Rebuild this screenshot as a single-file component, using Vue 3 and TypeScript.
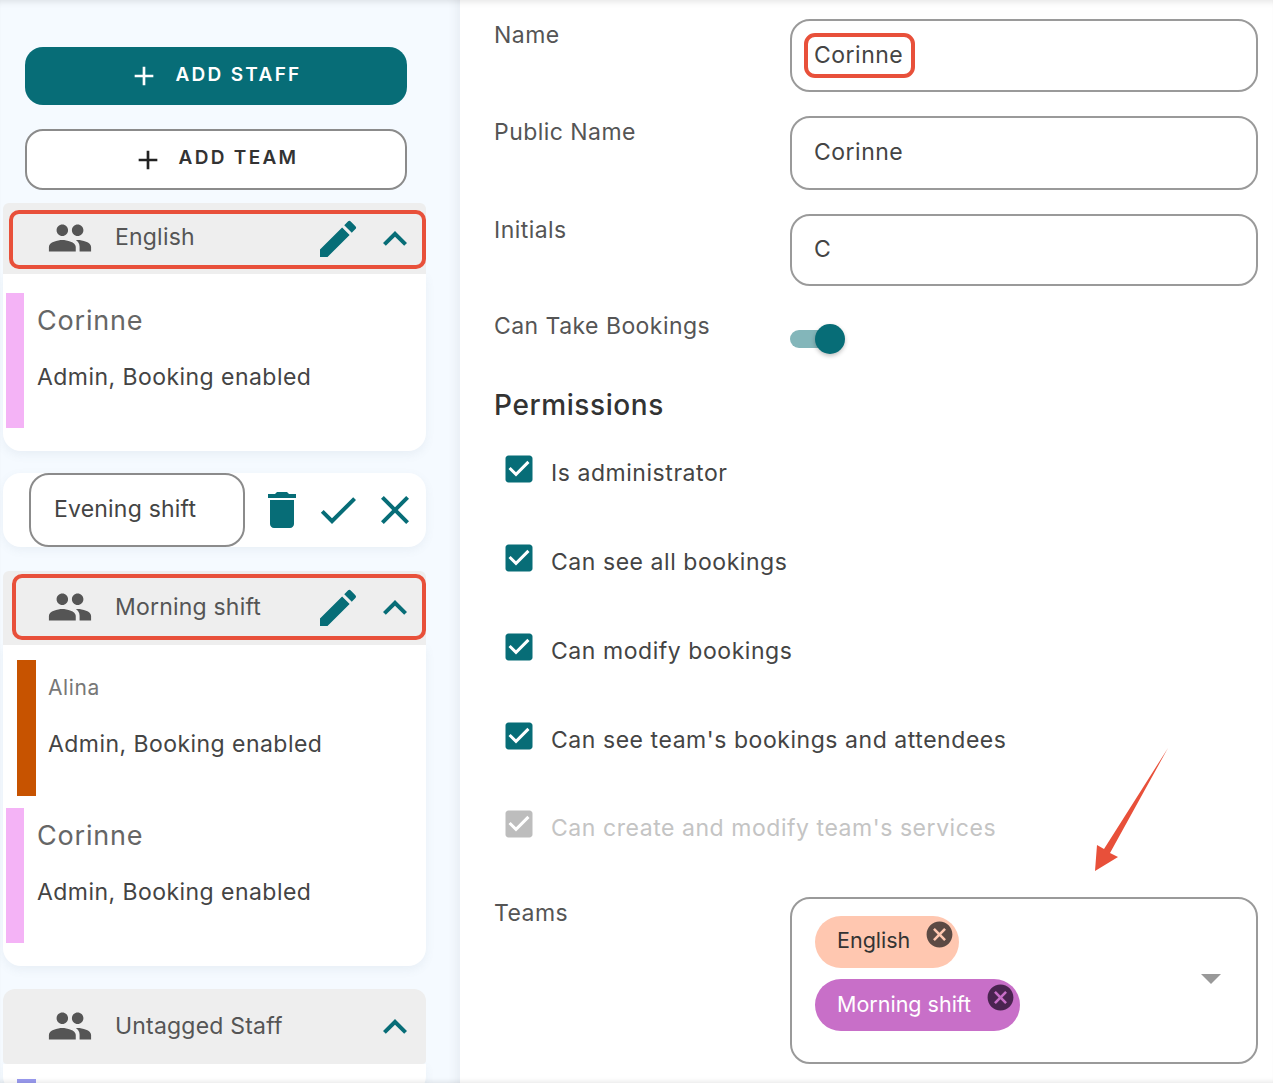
<script setup lang="ts">
interface Member {
  name: string
  color: string
  small?: boolean
  indent?: boolean
}

interface Team {
  name: string
  members: Member[]
}

const corinne: Member = { name: 'Corinne', color: '#f4b3f6' }

const english: Team = { name: 'English', members: [corinne] }
const morning: Team = {
  name: 'Morning shift',
  members: [{ name: 'Alina', color: '#c75300', small: true, indent: true }, corinne],
}

const permissions = [
  { label: 'Is administrator', disabled: false },
  { label: 'Can see all bookings', disabled: false },
  { label: 'Can modify bookings', disabled: false },
  { label: "Can see team's bookings and attendees", disabled: false },
  { label: "Can create and modify team's services", disabled: true },
]

const fields = [
  { label: 'Name', value: 'Corinne', marked: true, height: 73, gap: 24 },
  { label: 'Public Name', value: 'Corinne', marked: false, height: 74, gap: 24 },
  { label: 'Initials', value: 'C', marked: false, height: 72, gap: 24 },
]

const icons = {
  people: 'M16 11c1.66 0 2.99-1.34 2.99-3S17.66 5 16 5c-1.66 0-3 1.34-3 3s1.34 3 3 3zm-8 0c1.66 0 2.99-1.34 2.99-3S9.66 5 8 5C6.34 5 5 6.34 5 8s1.34 3 3 3zm0 2c-2.33 0-7 1.17-7 3.5V19h14v-2.5c0-2.33-4.67-3.5-7-3.5zm8 0c-.29 0-.62.02-.97.05 1.16.84 1.97 1.97 1.97 3.45V19h6v-2.5c0-2.33-4.67-3.5-7-3.5z',
  pencil: 'M3 17.25V21h3.75L17.81 9.94l-3.75-3.75L3 17.25zM20.71 7.04a.996.996 0 000-1.41l-2.34-2.34a.996.996 0 00-1.41 0l-1.83 1.83 3.75 3.75 1.83-1.83z',
  chevron: 'M7.41 15.41L12 10.83l4.59 4.58L18 14l-6-6-6 6z',
  trash: 'M6 19c0 1.1.9 2 2 2h8c1.1 0 2-.9 2-2V7H6v12zM19 4h-3.5l-1-1h-5l-1 1H5v2h14V4z',
  check: 'M9 16.17L4.83 12l-1.41 1.41L9 19 21 7l-1.41-1.41z',
  close: 'M19 6.41L17.59 5 12 10.59 6.41 5 5 6.41 10.59 12 5 17.59 6.41 19 12 13.41 17.59 19 19 17.59 13.41 12z',
  plus: 'M19 13h-6v6h-2v-6H5v-2h6V5h2v6h6v2z',
  cancel: 'M12 2C6.47 2 2 6.47 2 12s4.47 10 10 10 10-4.47 10-10S17.53 2 12 2zm5 13.59L15.59 17 12 13.41 8.41 17 7 15.59 10.59 12 7 8.41 8.41 7 12 10.59 15.59 7 17 8.41 13.41 12 17 15.59z',
  checkbox: 'M19 3H5c-1.11 0-2 .9-2 2v14c0 1.1.89 2 2 2h14c1.11 0 2-.9 2-2V5c0-1.1-.89-2-2-2zm-9 14l-5-5 1.41-1.41L10 14.17l7.59-7.59L19 8l-9 9z',
}
</script>

<template>
  <div class="page">
    <aside class="sidebar">
      <button class="add-btn primary">
        <svg class="plus" viewBox="0 0 24 24"><path :d="icons.plus" /></svg>
        <span>ADD STAFF</span>
      </button>
      <button class="add-btn outline">
        <svg class="plus" viewBox="0 0 24 24"><path :d="icons.plus" /></svg>
        <span>ADD TEAM</span>
      </button>

      <section class="team first">
        <header class="team-head">
          <svg class="ic people" viewBox="0 0 24 24"><path :d="icons.people" /></svg>
          <span class="team-name">{{ english.name }}</span>
          <svg class="ic teal pencil" viewBox="0 0 24 24"><path :d="icons.pencil" /></svg>
          <svg class="ic teal chevron" viewBox="0 0 24 24"><path :d="icons.chevron" /></svg>
          <div class="mark"></div>
        </header>
        <div class="team-body">
          <div v-for="m in english.members" :key="m.name" class="member">
            <div class="stripe" :style="{ background: m.color }"></div>
            <div class="member-text">
              <div class="member-name">{{ m.name }}</div>
              <div class="member-role">Admin, Booking enabled</div>
            </div>
          </div>
        </div>
      </section>

      <section class="edit-card">
        <div class="edit-input">Evening shift</div>
        <svg class="ic teal trash" viewBox="0 0 24 24"><path :d="icons.trash" /></svg>
        <svg class="ic teal check" viewBox="0 0 24 24"><path :d="icons.check" /></svg>
        <svg class="ic teal close" viewBox="0 0 24 24"><path :d="icons.close" /></svg>
      </section>

      <section class="team second">
        <header class="team-head">
          <svg class="ic people" viewBox="0 0 24 24"><path :d="icons.people" /></svg>
          <span class="team-name">{{ morning.name }}</span>
          <svg class="ic teal pencil" viewBox="0 0 24 24"><path :d="icons.pencil" /></svg>
          <svg class="ic teal chevron" viewBox="0 0 24 24"><path :d="icons.chevron" /></svg>
          <div class="mark narrow"></div>
        </header>
        <div class="team-body">
          <div
            v-for="m in morning.members"
            :key="m.name"
            class="member"
            :class="{ indent: m.indent }"
          >
            <div class="stripe" :style="{ background: m.color }"></div>
            <div class="member-text">
              <div class="member-name" :class="{ small: m.small }">{{ m.name }}</div>
              <div class="member-role">Admin, Booking enabled</div>
            </div>
          </div>
        </div>
      </section>

      <section class="team third">
        <header class="team-head">
          <svg class="ic people" viewBox="0 0 24 24"><path :d="icons.people" /></svg>
          <span class="team-name">Untagged Staff</span>
          <svg class="ic teal chevron" viewBox="0 0 24 24"><path :d="icons.chevron" /></svg>
        </header>
        <div class="team-body tail">
          <div class="stripe blue"></div>
        </div>
      </section>
    </aside>

    <main class="form">
      <div
        v-for="f in fields"
        :key="f.label"
        class="row"
        :style="{ marginBottom: f.gap + 'px' }"
      >
        <label class="label">{{ f.label }}</label>
        <div class="input" :style="{ height: f.height + 'px' }">
          <span class="value" :class="{ marked: f.marked }">{{ f.value }}</span>
        </div>
      </div>

      <div class="row toggle-row">
        <label class="label">Can Take Bookings</label>
        <div class="toggle">
          <div class="track"></div>
          <div class="thumb"></div>
        </div>
      </div>

      <h2 class="heading">Permissions</h2>

      <div class="perms">
        <div
          v-for="p in permissions"
          :key="p.label"
          class="perm"
          :class="{ disabled: p.disabled }"
        >
          <svg class="box" viewBox="0 0 24 24"><path :d="icons.checkbox" /></svg>
          <span>{{ p.label }}</span>
        </div>
      </div>

      <div class="row teams-row">
        <label class="label">Teams</label>
        <div class="select">
          <div class="chips">
            <div class="chip peach">
              <span>English</span>
              <svg viewBox="0 0 24 24"><path :d="icons.cancel" /></svg>
            </div>
            <div class="chip purple">
              <span>Morning shift</span>
              <svg viewBox="0 0 24 24"><path :d="icons.cancel" /></svg>
            </div>
          </div>
          <div class="caret"></div>
        </div>
      </div>
    </main>

    <svg class="arrow" viewBox="0 0 80 130" width="80" height="130">
      <path d="M75 1 L17 106 L25 110 L2 124 L4 98 L11 102 Z" fill="#e8503a" />
    </svg>
    <div class="edge"></div>
  </div>
</template>

<style>
html,
body {
  margin: 0;
  background: #fff;
}
</style>

<style scoped>
.page {
  position: relative;
  display: flex;
  width: 1273px;
  height: 1083px;
  overflow: hidden;
  background: #fff;
  font-family: Inter, "Liberation Sans", sans-serif;
  color: #555;
}

.edge {
  position: absolute;
  inset: 0;
  pointer-events: none;
  box-shadow: inset 0 7px 6px -5px rgba(0, 0, 0, 0.1), inset 0 -5px 4px -3px rgba(0, 0, 0, 0.08);
}

.sidebar {
  width: 460px;
  flex: none;
  box-sizing: border-box;
  padding-top: 47px;
  background: #f5faff;
  box-shadow: inset -12px 0 10px -8px rgba(60, 70, 90, 0.07);
}

.add-btn {
  display: flex;
  align-items: center;
  justify-content: center;
  gap: 15px;
  box-sizing: border-box;
  width: 382px;
  margin-left: 25px;
  padding: 0 2px 0 0;
  border-radius: 18px;
  font-family: inherit;
  font-size: 19px;
  font-weight: 600;
  letter-spacing: 2.3px;
}

.add-btn span {
  position: relative;
  top: -2px;
}

.add-btn.primary {
  height: 58px;
  border: none;
  background: #076d77;
  color: #fff;
}

.add-btn.primary .plus {
  fill: #fff;
}

.add-btn.outline {
  height: 61px;
  margin-top: 24px;
  border: 2px solid #8b8b8b;
  background: #fff;
  color: #333;
}

.add-btn.outline .plus {
  fill: #222;
}

.plus {
  width: 32px;
  height: 32px;
}

.team {
  width: 423px;
  margin-left: 3px;
}

.team.first {
  margin-top: 13px;
}

.team.second {
  margin-top: 24px;
}

.team.third {
  margin-top: 23px;
}

.team-head {
  position: relative;
  display: flex;
  align-items: center;
  height: 71px;
  padding-left: 44px;
  padding-right: 7px;
  background: #eeeeee;
  border-radius: 6px 6px 0 0;
  box-sizing: border-box;
}

.second .team-head {
  height: 74px;
}

.third .team-head {
  height: 75px;
  border-radius: 12px 12px 4px 4px;
}

.ic {
  flex: none;
  width: 48px;
  height: 48px;
}

.people {
  width: 46px;
  height: 46px;
  fill: #555;
  position: relative;
  top: -1px;
}

.teal {
  fill: #076d77;
}

.team-name {
  flex: 1;
  position: relative;
  top: -1px;
  margin-left: 22px;
  font-size: 23px;
  letter-spacing: 0.2px;
  color: #555;
}

.first .team-name {
  top: -2px;
}

.chevron {
  margin-left: 9px;
}

.mark {
  position: absolute;
  left: 6px;
  right: 0;
  top: 7px;
  height: 59px;
  box-sizing: border-box;
  border: 4px solid #e8503a;
  border-radius: 10px;
}

.mark.narrow {
  left: 9px;
  top: 3px;
  height: 66px;
}

.team-body {
  background: #fff;
  border-radius: 0 0 18px 18px;
  padding: 19px 0 23px;
  box-shadow: 0 4px 10px rgba(90, 110, 140, 0.08);
}

.second .team-body {
  padding-top: 15px;
}

.member {
  display: flex;
  height: 135px;
  margin-left: 3px;
}

.member + .member {
  margin-top: 12px;
}

.member.indent {
  height: 136px;
  margin-left: 14px;
}

.stripe {
  flex: none;
  width: 18px;
  height: 100%;
}

.member.indent .stripe {
  width: 19px;
}

.member-text {
  padding-left: 13px;
}

.member.indent .member-text {
  padding-left: 12px;
}

.member-name {
  height: 56px;
  font-size: 27px;
  line-height: 56px;
  letter-spacing: 0.8px;
  color: #666;
}

.member-name.small {
  font-size: 21px;
  letter-spacing: 0.6px;
  color: #777;
}

.member-role {
  font-size: 23px;
  line-height: 56px;
  letter-spacing: 0.45px;
  color: #444;
}

.tail {
  height: 30px;
  box-sizing: border-box;
  padding: 15px 0 0 14px;
}

.stripe.blue {
  width: 19px;
  height: 20px;
  background: #9a9bf0;
}

.edit-card {
  display: flex;
  align-items: center;
  box-sizing: border-box;
  width: 423px;
  height: 74px;
  margin: 22px 0 0 3px;
  padding-left: 26px;
  background: #fff;
  border-radius: 18px;
  box-shadow: 0 3px 10px rgba(90, 110, 140, 0.08);
}

.edit-input {
  flex: none;
  display: flex;
  align-items: center;
  box-sizing: border-box;
  width: 216px;
  height: 74px;
  padding: 0 0 2px 23px;
  border: 2px solid #8b8b8b;
  border-radius: 20px;
  font-size: 23px;
  letter-spacing: 0.2px;
  color: #444;
}

.trash {
  margin-left: 13px;
}

.check {
  margin-left: 8px;
}

.close {
  margin-left: 9px;
}

.form {
  flex: 1;
  box-sizing: border-box;
  padding: 19px 15px 0 34px;
}

.row {
  display: grid;
  grid-template-columns: 296px 1fr;
}

.label {
  padding-top: 1px;
  font-size: 23px;
  line-height: 30px;
  letter-spacing: 0.45px;
  color: #555;
}

.input {
  display: flex;
  align-items: center;
  box-sizing: border-box;
  padding: 0 0 2px 22px;
  border: 2px solid #9a9a9a;
  border-radius: 20px;
  font-size: 23px;
  letter-spacing: 0.5px;
  color: #444;
}

.value {
  position: relative;
}

.value.marked::after {
  content: "";
  position: absolute;
  inset: -8px -12px -9px -10px;
  border: 4px solid #e8503a;
  border-radius: 11px;
}

.toggle-row {
  height: 48px;
}

.toggle {
  position: relative;
  width: 56px;
  height: 30px;
  margin-top: 14px;
}

.track {
  position: absolute;
  left: 0;
  top: 6px;
  width: 46px;
  height: 18px;
  border-radius: 9px;
  background: #83b6ba;
}

.thumb {
  position: absolute;
  left: 25px;
  top: 0;
  width: 30px;
  height: 30px;
  border-radius: 50%;
  background: #076d77;
  box-shadow: 0 2px 4px rgba(0, 0, 0, 0.25);
}

.heading {
  margin: 29px 0 0;
  font-size: 28px;
  line-height: 36px;
  font-weight: 500;
  letter-spacing: 0.6px;
  color: #333;
}

.perms {
  margin-top: 3px;
}

.perm {
  display: flex;
  align-items: center;
  height: 88.75px;
  padding-left: 7px;
  font-size: 23px;
  letter-spacing: 0.55px;
  color: #444;
}

.perm span {
  margin-left: 14px;
  position: relative;
  top: 3px;
}

.perm .box {
  flex: none;
  width: 36px;
  height: 36px;
  fill: #076d77;
  position: relative;
  top: -1px;
}

.perm.disabled {
  color: #c4c4c4;
}

.perm.disabled .box {
  fill: #bdbdbd;
}

.teams-row {
  margin-top: 27px;
}

.select {
  position: relative;
  height: 167px;
  box-sizing: border-box;
  padding: 17px 0 0 23px;
  border: 2px solid #9a9a9a;
  border-radius: 20px;
}

.chips {
  display: flex;
  flex-direction: column;
  align-items: flex-start;
  gap: 11px;
}

.chip {
  display: flex;
  align-items: center;
  gap: 14px;
  box-sizing: border-box;
  height: 52px;
  padding: 0 4px 0 22px;
  border-radius: 26px;
  font-size: 21.5px;
}

.chip span {
  position: relative;
  top: -1px;
}

.chip svg {
  width: 31px;
  height: 31px;
  position: relative;
  top: -7px;
}

.chip.peach span {
  top: -2px;
}

.chip.peach {
  background: #ffc7b0;
  color: #333;
}

.chip.peach svg {
  fill: #5c4a44;
}

.chip.purple {
  background: #c86fc8;
  color: #fff;
}

.chip.purple svg {
  fill: #4a2450;
}

.caret {
  position: absolute;
  right: 35px;
  top: 75px;
  width: 0;
  height: 0;
  border-left: 10px solid transparent;
  border-right: 10px solid transparent;
  border-top: 10px solid #999;
}

.arrow {
  position: absolute;
  left: 1093px;
  top: 747px;
}
</style>
